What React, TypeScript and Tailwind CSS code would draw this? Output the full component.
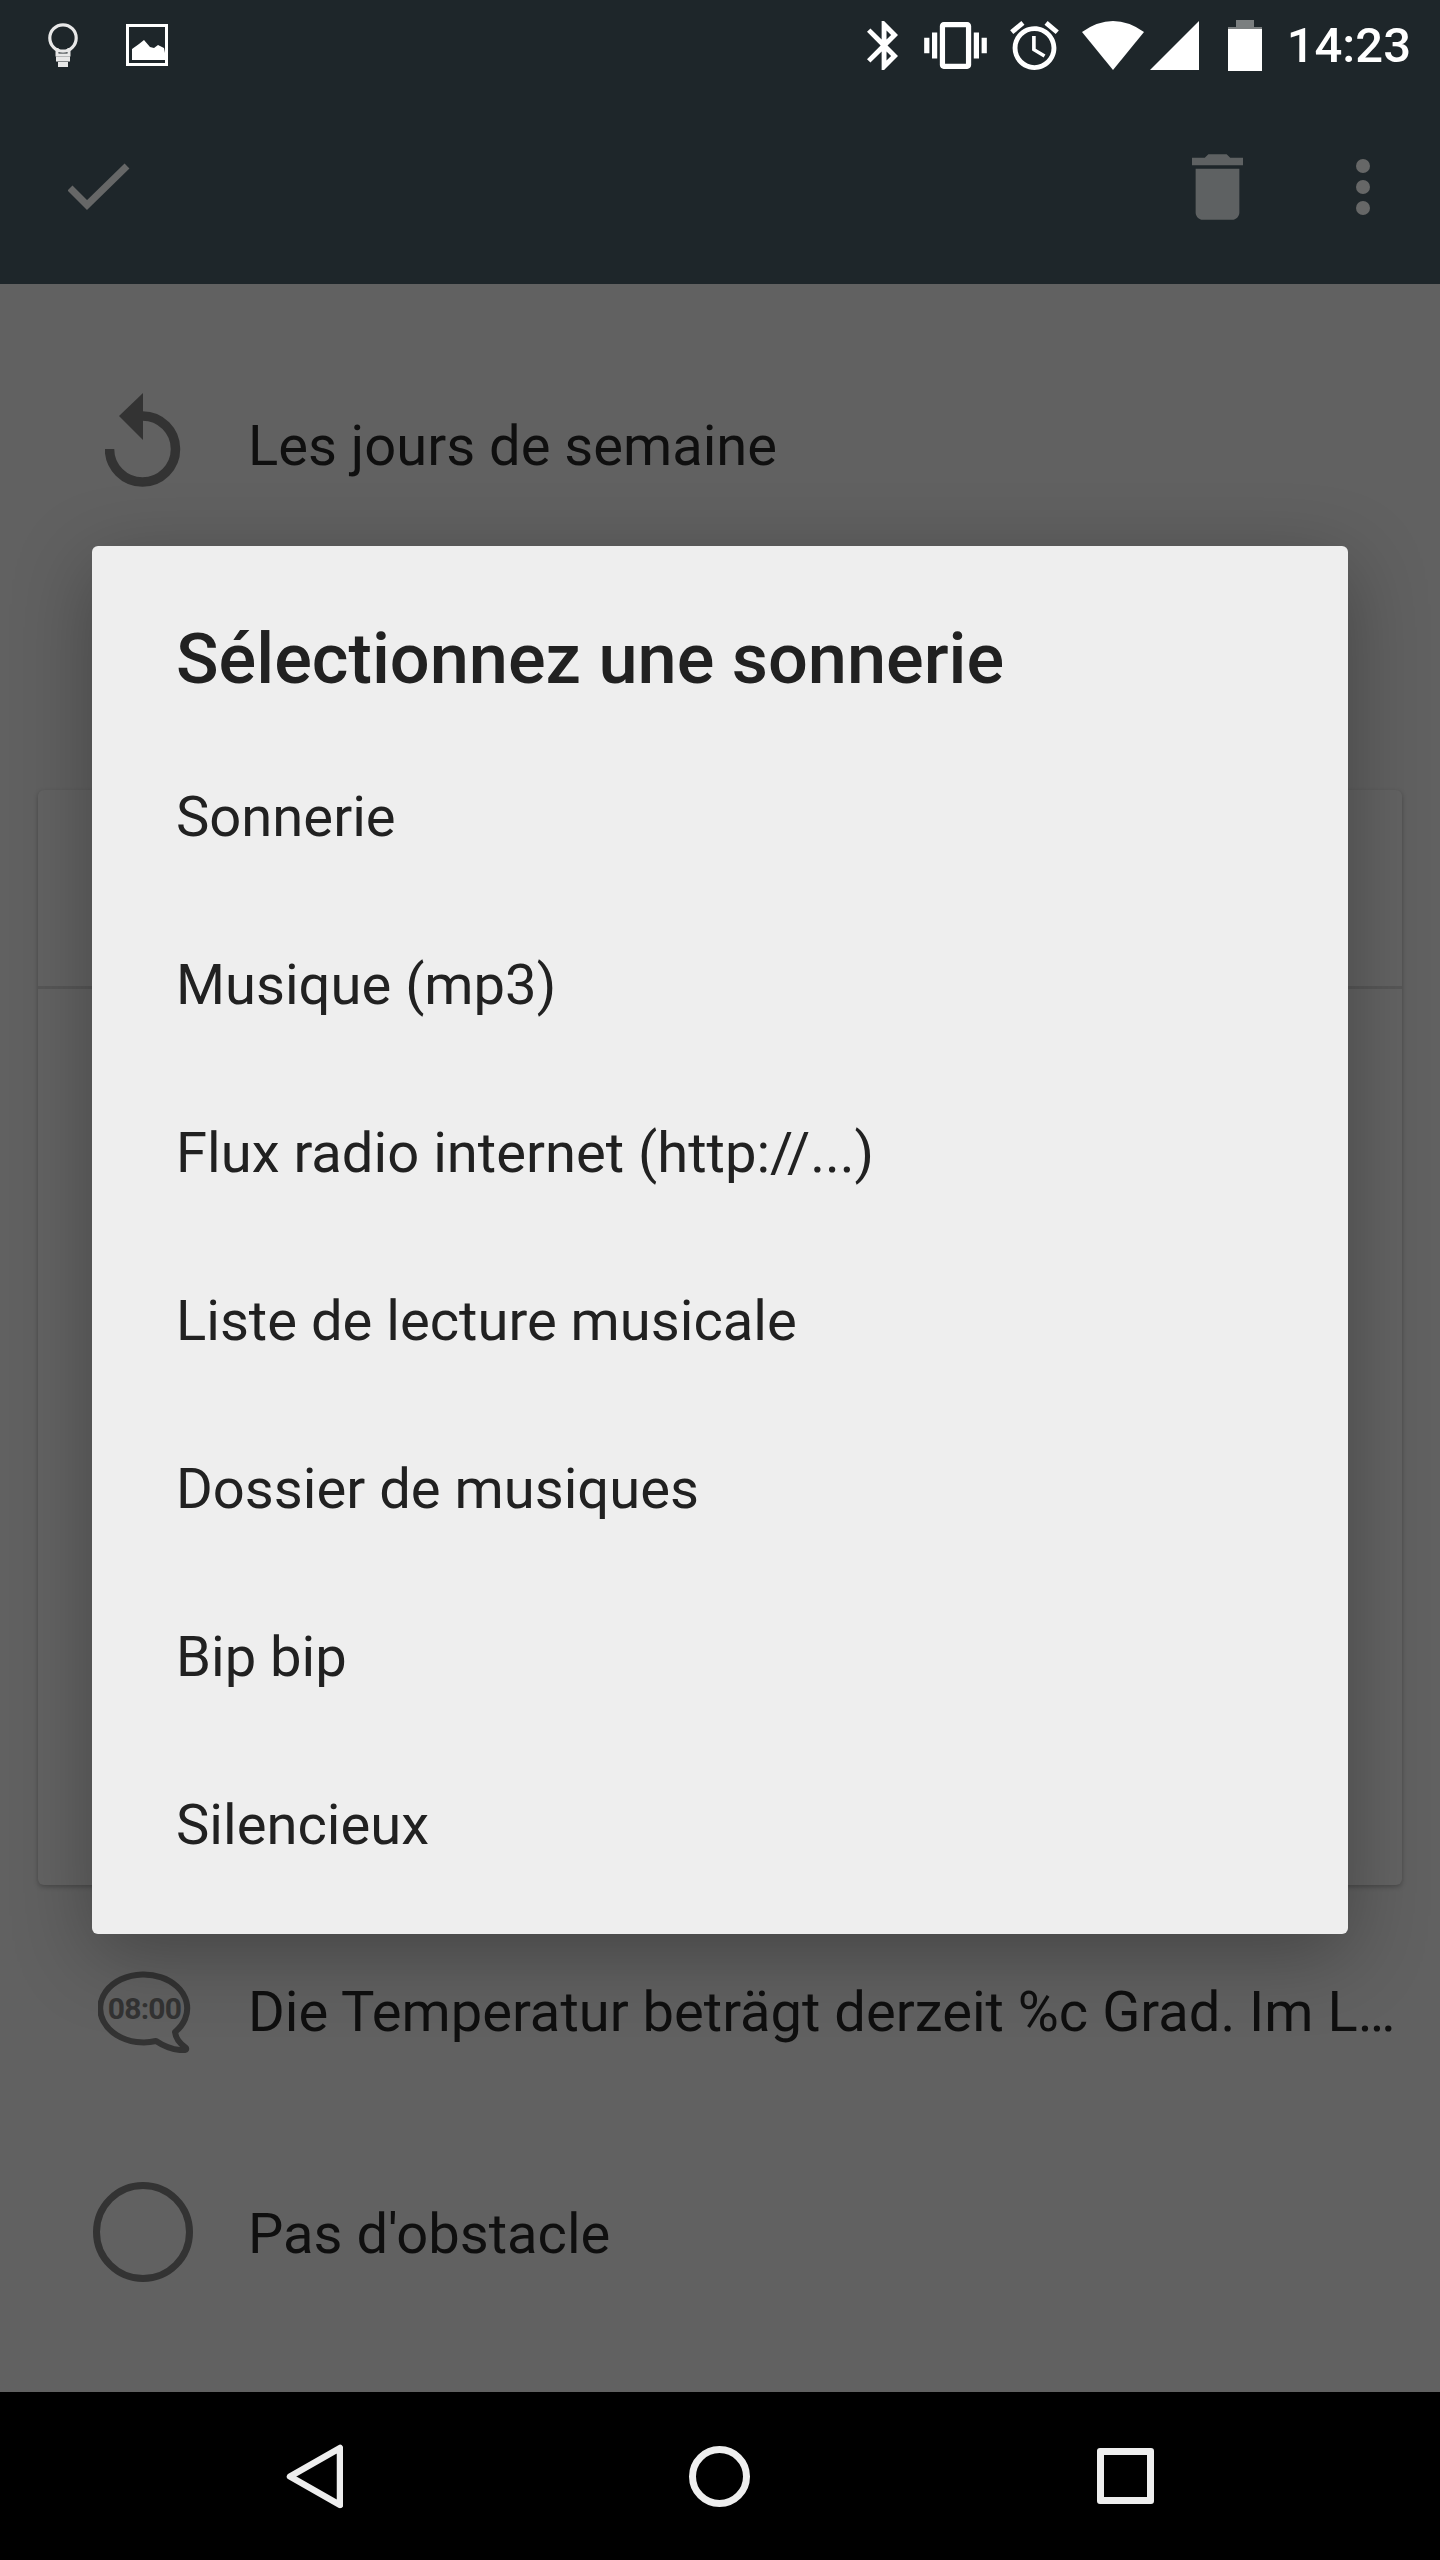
import React from 'react';

const items = [
  'Sonnerie',
  'Musique (mp3)',
  'Flux radio internet (http://...)',
  'Liste de lecture musicale',
  'Dossier de musiques',
  'Bip bip',
  'Silencieux',
];

const BulbIcon = () => (
  <svg width="30" height="44" viewBox="0 0 30 44" fill="none">
    <circle cx="15" cy="15" r="13.2" stroke="#e8e8e8" strokeWidth="3.2" />
    <path d="M9 25v7h12v-7" stroke="#e8e8e8" strokeWidth="3" />
    <path d="M8 33.5h14v5H8z" fill="#e8e8e8" />
    <path d="M10 39h10v5H10z" fill="#e8e8e8" />
  </svg>
);

const ImageIcon = () => (
  <svg width="42" height="42" viewBox="0 0 42 42" fill="none">
    <rect x="1.5" y="1.5" width="39" height="39" stroke="#fff" strokeWidth="3" />
    <path d="M6 36V25l7-5 5-4 6 7 4 1 4-3 6 3 1 5v7z" fill="#fff" />
  </svg>
);

const CheckIcon = () => (
  <svg width="62" height="48" viewBox="0 0 62 48" fill="none">
    <path d="M2 25l17 17L59 3" stroke="#666767" strokeWidth="7" />
  </svg>
);

const UndoIcon = () => (
  <svg className="mb-[12px]" width="76" height="94" viewBox="0 0 76 94" fill="none">
    <path d="M4.5 56A33 33 0 1 0 37.5 23" stroke="#333" strokeWidth="9.5" />
    <path d="M38 0L14 23l24 24z" fill="#333" />
  </svg>
);

const SpeechIcon = () => (
  <svg className="ml-[3px]" width="94" height="82" viewBox="0 0 94 82" fill="none">
    <path
      d="M58 70A43.5 34 0 1 1 77 61Q78 70 88 77Q89 80 82 79Q70 78 58 70Z"
      stroke="#333"
      strokeWidth="6"
      strokeLinejoin="round"
    />
    <text x="46.5" y="48" textAnchor="middle" fill="#333" fontSize="30" fontWeight="700" className="font-['Roboto']" letterSpacing="-0.8">
      08:00
    </text>
  </svg>
);

function Row({ icon, text, className, textClass = '' }: { icon: React.ReactNode; text: string; className: string; textClass?: string }) {
  return (
    <div className={`flex items-center ${className}`}>
      <div className="w-[248px] shrink-0 pl-[93px]">
        <div className="flex w-[100px] justify-center">{icon}</div>
      </div>
      <span className={`text-[56.1px] leading-none text-[#0f0f0f] ${textClass}`}>{text}</span>
    </div>
  );
}

export default function App() {
  return (
    <div className="relative flex h-[2560px] w-[1440px] flex-col overflow-hidden bg-[#616161] font-['Roboto',sans-serif]">
      <div className="h-[284px] shrink-0 bg-[#1e262a]">
        <div className="flex h-[90px] items-center pl-[48px]">
          <BulbIcon />
          <div className="ml-[48px]">
            <ImageIcon />
          </div>
          <div className="ml-auto flex items-center pr-[29px]">
            <svg width="31" height="49" viewBox="5 2 12.71 20" fill="#fff">
              <path d="M17.71 7.71L12 2h-1v7.59L6.41 5 5 6.41 10.59 12 5 17.59 6.41 19 11 14.41V22h1l5.71-5.71-4.3-4.29 4.3-4.29zM13 5.83l1.88 1.88L13 9.59V5.83zm1.88 10.46L13 18.17v-3.76l1.88 1.88z" />
            </svg>
            <svg className="ml-[26px]" width="63" height="47" viewBox="0 3 24 18" fill="#fff">
              <path d="M0 15h2V9H0v6zm3 2h2V7H3v10zm19-8v6h2V9h-2zm-3 8h2V7h-2v10zM16.5 3h-9C6.67 3 6 3.67 6 4.5v15c0 .83.67 1.5 1.5 1.5h9c.83 0 1.5-.67 1.5-1.5v-15c0-.83-.67-1.5-1.5-1.5zM16 19H8V5h8v14z" />
            </svg>
            <svg className="ml-[23px]" width="49" height="49" viewBox="2 1.86 20 20.14" fill="#fff">
              <path d="M22 5.72l-4.6-3.86-1.29 1.53 4.6 3.86L22 5.72zM7.88 3.39L6.6 1.86 2 5.71l1.29 1.53 4.59-3.85zM12.5 8H11v6l4.75 2.85.75-1.23-4-2.37V8zM12 4c-4.97 0-9 4.03-9 9s4.03 9 9 9 9-4.03 9-9-4.03-9-9-9zm0 16c-3.87 0-7-3.13-7-7s3.13-7 7-7 7 3.13 7 7-3.13 7-7 7z" />
            </svg>
            <svg className="ml-[23px]" width="62" height="49" viewBox="0 0 62 49" fill="#fff">
              <path d="M0 11Q31 -11 62 11L31 49Z" />
            </svg>
            <svg className="ml-[6px]" width="49" height="49" viewBox="0 0 49 49" fill="#fff">
              <path d="M0 49L49 0V49Z" />
            </svg>
            <svg className="ml-[29px]" width="34" height="51" viewBox="0 0 34 51">
              <path d="M8 0h18v7h8v2H0V7h8z" fill="#7b7f80" />
              <path d="M0 9h34v42H0z" fill="#fff" />
            </svg>
            <span className="ml-[25px] text-[49px] leading-none font-medium text-white">14:23</span>
          </div>
        </div>
        <div className="flex h-[194px] items-center pl-[68px]">
          <CheckIcon />
          <svg className="ml-auto" width="51" height="66" viewBox="5 3 14 18" fill="#5e6162">
            <path d="M6 19c0 1.1.9 2 2 2h8c1.1 0 2-.9 2-2V7H6v12zM19 4h-3.5l-1-1h-5l-1 1H5v2h14V4z" />
          </svg>
          <div className="mr-[70px] ml-[113px] flex flex-col gap-[7px]">
            <div className="h-[14px] w-[14px] rounded-full bg-[#666767]" />
            <div className="h-[14px] w-[14px] rounded-full bg-[#666767]" />
            <div className="h-[14px] w-[14px] rounded-full bg-[#666767]" />
          </div>
        </div>
      </div>

      <Row icon={<UndoIcon />} text="Les jours de semaine" className="h-[324px]" />

      <div className="mx-[38px] mt-[182px] h-[1095px] shrink-0 rounded-[6px] bg-[#636363] shadow-[0_2px_5px_rgba(0,0,0,0.25)]">
        <div className="h-[199px] border-b-[3px] border-[#575757]" />
      </div>

      <Row
        icon={<SpeechIcon />}
        text="Die Temperatur beträgt derzeit %c Grad. Im L…"
        className="h-[254px]"
      />
      <Row
        icon={<div className="h-[100px] w-[100px] rounded-full border-[7px] border-[#333]" />}
        text="Pas d'obstacle"
        className="h-[186px]"
        textClass="pt-[4px]"
      />

      <div className="mt-auto flex h-[168px] shrink-0 items-center bg-black">
        <svg className="ml-[286px]" width="57" height="65" viewBox="0 0 57 65" fill="none">
          <path d="M54 4V61L4 32.5Z" stroke="#eee" strokeWidth="6.5" strokeLinejoin="round" />
        </svg>
        <div className="ml-[346px] h-[61px] w-[61px] rounded-full border-[7px] border-[#eee]" />
        <div className="ml-[347px] h-[56px] w-[57px] rounded-[3px] border-[7px] border-[#eee]" />
      </div>

      <div className="absolute top-[546px] left-[92px] h-[1388px] w-[1256px] rounded-[6px] bg-[#eeeeee] shadow-[0_20px_80px_rgba(0,0,0,0.3)]">
        <div className="h-[186px] pt-[71px] pl-[84px] text-[70.3px] leading-[84px] font-medium text-[#212121]">
          Sélectionnez une sonnerie
        </div>
        {items.map((item) => (
          <div key={item} className="flex h-[168px] items-center pt-[2px] pl-[84px] text-[56.15px] text-[#212121]">
            {item}
          </div>
        ))}
      </div>
    </div>
  );
}
